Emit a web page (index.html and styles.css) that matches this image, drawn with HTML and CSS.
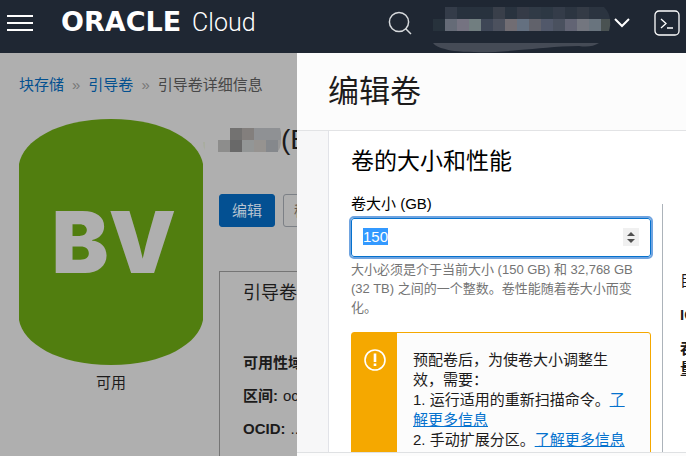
FILE: index.html
```html
<!DOCTYPE html>
<html lang="zh-CN">
<head>
<meta charset="utf-8">
<meta name="viewport" content="width=device-width, initial-scale=1">
<title>Oracle Cloud</title>
<link rel="stylesheet" href="styles.css">
</head>
<body>
<header class="topbar">
  <button class="icon-button" type="button" aria-label="菜单">
    <svg width="26" height="16" viewBox="0 0 26 16"><path d="M0 1h26M0 8h26M0 15h26" stroke="#fff" stroke-width="2"/></svg>
  </button>
  <a class="brand" href="#"><span class="brand-name">ORACLE</span><span class="brand-product">Cloud</span></a>
  <div class="tools">
    <button class="icon-button" type="button" aria-label="搜索">
      <svg width="24" height="24" viewBox="0 0 24 24" fill="none" stroke="#d6d9dc" stroke-width="1.5"><circle cx="11" cy="11" r="9.6"/><path d="M17.5 17.5L23 23"/></svg>
    </button>
    <button class="icon-button region" type="button" aria-label="区域">
      <svg class="redacted" width="178" height="46" viewBox="0 0 178 46">
        <g fill="#303a46">
          <path fill="#343c49" d="M12 0h12v12H12z"/><path fill="#28323e" d="M24 0h36v12H24z"/><path fill="#393f4a" d="M60 0h12v12H60z"/><path fill="#29333f" d="M72 0h12v12H72z"/><path fill="#353b47" d="M84 0h12v12H84z"/><path d="M96 0h12v12H96z"/><path fill="#2d3844" d="M108 0h12v12h-12z"/><path fill="#343c49" d="M120 0h12v12h-12z"/><path fill="#2c3541" d="M132 0h12v12h-12z"/><path fill="#343b46" d="M144 0h12v12h-12z"/><path fill="#2b3440" d="M156 0h15q5 5 6 12h-21z"/>
        </g>
        <path fill="#27323c" d="M0 12h12v12H0z"/><path fill="#656b77" d="M12 12h12v12H12z"/><path fill="#757381" d="M24 12h12v12H24z"/><path fill="#717e80" d="M36 12h12v12H36z"/><path fill="#3e4656" d="M48 12h12v12H48z"/><path fill="#4c515e" d="M60 12h12v12H60z"/><path fill="#716d73" d="M72 12h12v12H72z"/><path fill="#647080" d="M84 12h12v12H84z"/><path fill="#61626b" d="M96 12h12v12H96z"/><path fill="#51586a" d="M108 12h12v12h-12z"/><path fill="#4a515f" d="M120 12h12v12h-12z"/><path fill="#626474" d="M132 12h12v12h-12z"/><path fill="#73767f" d="M144 12h12v12h-12z"/><path fill="#69747e" d="M156 12h12v12h-12z"/><path fill="#4a5252" d="M168 12h9q1 6-1 12h-8z"/>
        <path fill="#454b56" d="M0 36h166q-8 5-20 3c-24 0-42 3-60 4-24 3-64 3-74-1Q3 40 0 36z"/>
      </svg>
      <svg width="16" height="10" viewBox="0 0 16 10" fill="none" stroke="#fff" stroke-width="2"><path d="M1 1l7 7 7-7"/></svg>
    </button>
    <button class="icon-button shell" type="button" aria-label="Cloud Shell">
      <svg width="26" height="26" viewBox="0 0 26 26" fill="none" stroke="#fff" stroke-width="1.3"><rect x="1" y="1" width="24" height="24" rx="4"/><path d="M7 9l5 4.500-5 4.500M13 18h6"/></svg>
    </button>
  </div>
</header>
<div class="stage">
  <main class="page">
    <nav class="crumbs"><a href="#">块存储</a><span>»</span><a href="#">引导卷</a><span>»</span><b>引导卷详细信息</b></nav>
    <div class="resource">
      <figure class="volume">
        <svg width="184" height="246" viewBox="0 0 184 246"><path d="M0 45C4 22 38 0 92 0s88 22 92 45v156c-4 23-38 45-92 45S4 224 0 201z" fill="#517e0f"/><text class="volume-code" x="95" y="154" text-anchor="middle">BV</text></svg>
        <figcaption>可用</figcaption>
      </figure>
      <section class="details">
        <h1><svg width="78" height="28" viewBox="0 0 78 28"><path fill="#a9ada0" d="M0 16h2v8Q0 21 0 16z"/><path fill="#737271" d="M27 2h12v12H27z"/><path fill="#837f7d" d="M39 2h12v12H39z"/><path fill="#8f9194" d="M51 2h26q3 12 0 12H51z"/><path fill="#8d8d8c" d="M15 14h12v12H15z"/><path fill="#696969" d="M27 14h12v12H27z"/><path fill="#939696" d="M39 14h12v12H39z"/><path fill="#969390" d="M51 14h12v12H51z"/><path fill="#85888c" d="M63 14h12v12H63z"/><path fill="#979797" d="M75 14h3q0 8-3 11z"/></svg>(Boot Volume)</h1>
        <div class="actions"><button class="primary" type="button">编辑</button><button class="secondary" type="button">移动资源</button></div>
        <div class="info">
          <h2>引导卷信息</h2>
          <dl>
            <div><dt>可用性域:</dt></div>
            <div><dt>区间:</dt><dd>oc</dd></div>
            <div><dt>OCID:</dt><dd>...</dd></div>
          </dl>
        </div>
      </section>
    </div>
  </main>
  <aside class="drawer" aria-labelledby="drawer-title">
    <h2 class="drawer-title" id="drawer-title">编辑卷</h2>
    <div class="drawer-body">
      <form class="card">
        <h3>卷的大小和性能</h3>
        <div class="columns">
          <div class="size">
            <label for="size">卷大小 (GB)</label>
            <input id="size" type="number" value="150" min="150" max="32768">
            <p class="hint">大小必须是介于当前大小 (150 GB) 和 32,768 GB (32 TB) 之间的一个整数。卷性能随着卷大小而变化。</p>
            <div class="notice">
              <div class="notice-mark"><svg width="22" height="22" viewBox="0 0 22 22" fill="none" stroke="#fff"><circle cx="11" cy="11" r="10" stroke-width="1.6"/><path d="M11 4.500v8.500M11 14.500v2.500" stroke-width="2.600"/></svg></div>
              <div class="notice-text">
                <p>预配卷后，为使卷大小调整生效，需要：</p>
                <p>1. 运行适用的重新扫描命令。<a href="#">了解更多信息</a></p>
                <p>2. 手动扩展分区。<a href="#">了解更多信息</a></p>
              </div>
            </div>
          </div>
          <div class="performance">
            <p>目标</p>
            <p><strong>IOPS</strong></p>
            <p><strong>吞吐<br>量</strong></p>
          </div>
        </div>
      </form>
    </div>
    <footer class="drawer-foot"></footer>
  </aside>
</div>
<script src="app.js"></script>
</body>
</html>
```
FILE: styles.css
```css
* { box-sizing: border-box; }
body, h1, h2, h3, p, dl, dd, figure { margin: 0; }
body {
  display: flex;
  flex-direction: column;
  height: 100vh;
  overflow: hidden;
  background: #afafaf;
  color: #1c1b1b;
  font: 15px/20px "Liberation Sans", "Noto Sans CJK SC", sans-serif;
}
button, input { font: inherit; }
svg { display: block; flex: none; }
a { color: #0572ce; }

.topbar {
  display: flex;
  align-items: center;
  flex: none;
  height: 53px;
  padding: 0 6px 8px 7px;
  background: #1f2733;
}
.icon-button {
  display: flex;
  align-items: center;
  padding: 0;
  border: 0;
  background: none;
}
.brand {
  display: flex;
  align-items: baseline;
  gap: 11px;
  margin-left: 28px;
  color: #fff;
  text-decoration: none;
  line-height: 32px;
}
.brand-name { font: bold 27px/32px "DejaVu Sans", sans-serif; }
.brand-product { font: 300 25px/32px Roboto, sans-serif; }
.tools { display: flex; align-items: center; margin-left: auto; }
.region { margin-left: 21px; gap: 3px; }
.redacted { margin-top: 14px; }
.shell { margin-left: 24px; }

.stage { position: relative; flex: 1; min-height: 0; overflow: hidden; }
.page { padding: 22px 19px; white-space: nowrap; }
.crumbs { display: flex; gap: 8px; }
.crumbs a { color: #03508f; text-decoration: none; }
.crumbs span { color: #777; }
.crumbs b { color: #474747; font-weight: normal; }
.resource { display: flex; gap: 16px; margin-top: 24px; }
.volume { text-align: center; }
.volume-code { fill: #afafaf; font: 900 85px Inter, sans-serif; }
.volume figcaption { margin-top: 8px; }
.details { flex: none; }
.details h1 {
  display: flex;
  align-items: center;
  margin: 5px 0 0 -16px;
  font-size: 28px;
  font-weight: normal;
  line-height: 32px;
}
.actions { display: flex; gap: 8px; margin-top: 38px; }
.actions button { height: 33px; padding: 0 12px; border-radius: 3px; }
.actions .primary { border: 1px solid #035092; background: #035092; color: #b8c4d0; }
.actions .secondary { padding: 0 10px; border: 1px solid #7c8086; background: #afafaf; color: #60554c; }
.info { width: 420px; height: 300px; margin-top: 44px; padding: 9px 23px; border: 1px solid #757575; }
.info h2 { font-size: 18px; font-weight: normal; line-height: 24px; }
.info dl { display: grid; gap: 13px; margin-top: 48px; }
.info dl div { display: flex; gap: 5px; }
.info dt { font-weight: bold; }

.drawer {
  position: absolute;
  inset: 0 0 0 297px;
  display: flex;
  flex-direction: column;
  background: #f7f7f8;
}
.drawer-title {
  flex: none;
  height: 78px;
  padding-left: 31px;
  border-bottom: 1px solid #e2e3e5;
  background: #fcfcfc;
  font-size: 31px;
  font-weight: normal;
  line-height: 78px;
}
.drawer-body { flex: 1; min-height: 0; overflow: hidden; padding-left: 31px; }
.drawer-foot { flex: none; height: 4px; border-top: 1px solid #dfe1e3; background: #fcfcfc; }
.card { width: 720px; padding: 14px 22px; border-left: 1px solid #e2e3e8; background: #fff; }
.card h3 { color: #000; font-size: 23px; font-weight: normal; line-height: 32px; }
.columns { display: flex; gap: 11px; margin-top: 17px; }
.size { width: 300px; flex: none; }
.size label { display: block; color: #000; }
.size input {
  display: block;
  width: 100%;
  height: 39px;
  margin-top: 4px;
  padding: 0 11px 2px;
  border: 1px solid #0572ce;
  border-radius: 3px;
  outline: 2px solid #70a4e0;
  background: #fff;
  color: #333;
}
.size input::selection { background: #3399ff; color: #fff; }
.size input::-webkit-inner-spin-button {
  appearance: none;
  width: 16px;
  height: 18px;
  opacity: 1;
  background: #f0f0f0 url("data:image/svg+xml,%3Csvg xmlns='http://www.w3.org/2000/svg' width='16' height='18'%3E%3Cpath d='M4 8l4-4 4 4zM4 11l4 4 4-4z' fill='%23505050'/%3E%3C/svg%3E") center no-repeat;
}
.hint { margin-top: 3px; color: #747474; font-size: 13px; line-height: 19px; }
.notice {
  display: flex;
  margin-top: 15px;
  border: 1px solid #f5a800;
  border-radius: 3px;
  background: #fcfcfc;
}
.notice-mark { width: 45px; flex: none; padding: 16px 0 0 12px; background: #f5a800; }
.notice-text { padding: 17px 18px 17px 16px; }
.performance { margin-top: 10px; padding: 67px 0 0 17px; border-left: 1px solid #acb3ba; }
.performance p + p { margin-top: 14px; }
```
FILE: app.js
```js
const size = document.getElementById("size");
size.focus({ preventScroll: true });
size.select();
```
